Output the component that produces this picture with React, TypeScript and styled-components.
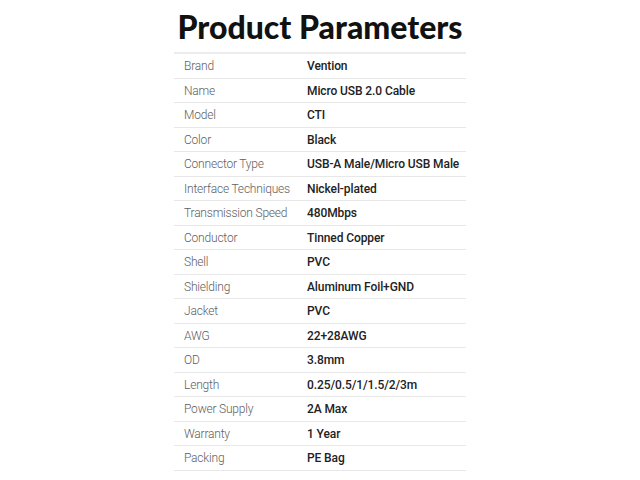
import React from 'react';
import styled, { createGlobalStyle } from 'styled-components';

const GlobalStyle = createGlobalStyle`
  html, body {
    margin: 0;
    padding: 0;
    background: #fff;
  }

  body {
    font-family: Roboto, 'Liberation Sans', sans-serif;
  }
`;

const Page = styled.div`
  width: 640px;
  height: 480px;
  display: flex;
  flex-direction: column;
  align-items: center;
  overflow: hidden;
`;

const Title = styled.h1`
  margin: 7px 0 0;
  height: 45px;
  font-family: Lato, 'Liberation Sans', sans-serif;
  font-size: 32px;
  line-height: 40px;
  font-weight: 900;
  color: #111;
`;

const Table = styled.div`
  width: 292px;
  border-top: 2px solid #ececec;
`;

const Row = styled.div`
  box-sizing: border-box;
  height: 24.5px;
  display: grid;
  grid-template-columns: 123px 1fr;
  align-items: center;
  padding: 1px 0 0 10px;
  border-bottom: 1px solid #e8e8e8;
  white-space: nowrap;
`;

const Label = styled.span`
  font-size: 12px;
  font-weight: 300;
  letter-spacing: -0.2px;
  color: #5e5e5e;
`;

const Value = styled.span`
  font-size: 12px;
  font-weight: 500;
  letter-spacing: -0.1px;
  color: #222;
`;

const params: [string, string][] = [
  ['Brand', 'Vention'],
  ['Name', 'Micro USB 2.0 Cable'],
  ['Model', 'CTI'],
  ['Color', 'Black'],
  ['Connector Type', 'USB-A Male/Micro USB Male'],
  ['Interface Techniques', 'Nickel-plated'],
  ['Transmission Speed', '480Mbps'],
  ['Conductor', 'Tinned Copper'],
  ['Shell', 'PVC'],
  ['Shielding', 'Aluminum Foil+GND'],
  ['Jacket', 'PVC'],
  ['AWG', '22+28AWG'],
  ['OD', '3.8mm'],
  ['Length', '0.25/0.5/1/1.5/2/3m'],
  ['Power Supply', '2A Max'],
  ['Warranty', '1 Year'],
  ['Packing', 'PE Bag'],
];

const App: React.FC = () => {
  return (
    <>
      <GlobalStyle />
      <Page>
        <Title>Product Parameters</Title>
        <Table>
          {params.map(([label, value]) => (
            <Row key={label}>
              <Label>{label}</Label>
              <Value>{value}</Value>
            </Row>
          ))}
        </Table>
      </Page>
    </>
  );
};

export default App;
